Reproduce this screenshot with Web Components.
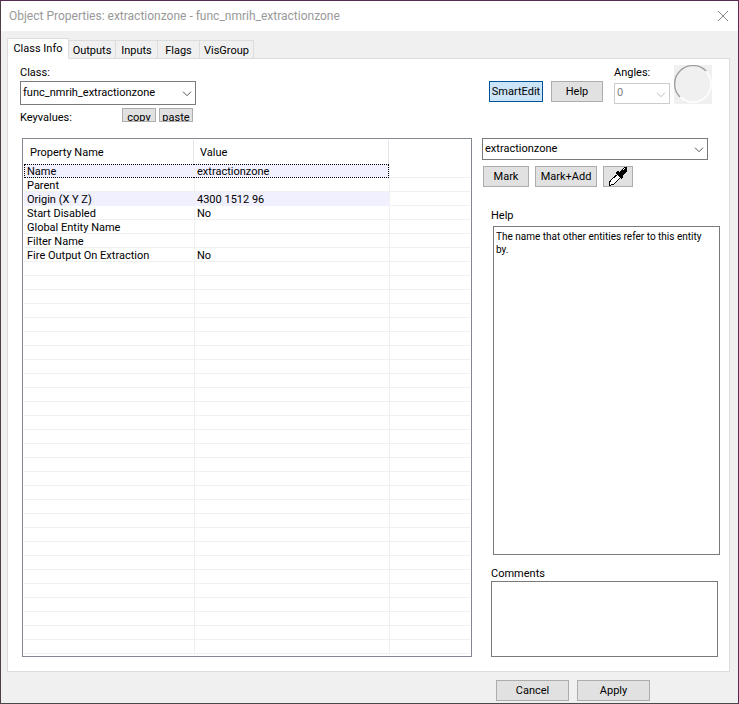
<!DOCTYPE html>
<html lang="en">
<head>
<meta charset="utf-8">
<title>Object Properties</title>
<style>
    body {
        margin: 0;
        font: 11px/16px Roboto, "Liberation Sans", sans-serif;
        color: #000;
    }
    .top {
        display: flex;
        justify-content: space-between;
        height: 67px;
        padding: 6px 17px 0 12px;
    }
    .class-info {
        --field-height: 24px;
        width: 176px;
    }
    .keyvalues {
        display: flex;
        gap: 3px;
        margin-top: 3px;
    }
    .keyvalues span {
        flex: 1;
        padding-top: 2px;
    }
    .keyvalues push-button {
        width: 34px;
    }
    .keyvalues push-button:last-child {
        margin-right: 3px;
    }
    .tools {
        display: flex;
        align-items: flex-start;
        gap: 8px;
    }
    .tools push-button {
        margin-top: 16px;
    }
    .tools combo-box {
        --label-height: 18px;
        --field-height: 21px;
        width: 56px;
        margin-left: 3px;
    }
    .tools angle-dial {
        margin-left: -4px;
    }
    .main {
        flex: 1;
        display: flex;
        gap: 10px;
        padding: 6px 9px 14px 14px;
    }
    property-list {
        flex: 1;
    }
    .side {
        display: flex;
        flex-direction: column;
        width: 238px;
    }
    .side combo-box {
        width: 226px;
    }
    .actions {
        display: flex;
        gap: 6px;
        margin: 6px 0 21px 1px;
    }
    .help {
        flex: 1;
        margin-left: 9px;
    }
    .comments {
        height: 91px;
        margin: 11px 2px 0 9px;
    }
</style>
</head>
<body>

<object-dialog caption="Object Properties: extractionzone - func_nmrih_extractionzone">
    <tab-strip slot="tabs" tabs="Class Info,Outputs,Inputs,Flags,VisGroup" widths="62,47,42,42,54"></tab-strip>

    <div class="top">
        <div class="class-info">
            <combo-box label="Class:" value="func_nmrih_extractionzone"></combo-box>
            <div class="keyvalues">
                <span>Keyvalues:</span>
                <push-button short>copy</push-button>
                <push-button short>paste</push-button>
            </div>
        </div>
        <div class="tools">
            <push-button active style="width: 54px">SmartEdit</push-button>
            <push-button style="width: 52px">Help</push-button>
            <combo-box label="Angles:" value="0" disabled></combo-box>
            <angle-dial></angle-dial>
        </div>
    </div>

    <div class="main">
        <property-list></property-list>
        <div class="side">
            <combo-box value="extractionzone" name="Value"></combo-box>
            <div class="actions">
                <push-button style="width: 46px">Mark</push-button>
                <push-button style="width: 62px">Mark+Add</push-button>
                <push-button style="width: 30px" name="Pick"><eye-dropper></eye-dropper></push-button>
            </div>
            <text-panel class="help" label="Help" inset readonly>The name that other entities refer to this entity by.</text-panel>
            <text-panel class="comments" label="Comments"></text-panel>
        </div>
    </div>

    <push-button slot="footer" style="width: 73px">Cancel</push-button>
    <push-button slot="footer" style="width: 73px">Apply</push-button>
</object-dialog>

<script>
class ObjectDialog extends HTMLElement {
    constructor() {
        super();
        this.attachShadow({ mode: 'open' });

        this.shadowRoot.innerHTML = `
            <style>
                :host {
                    display: flex;
                    flex-direction: column;
                    box-sizing: border-box;
                    min-height: 100vh;
                    border: 1px solid #5a2a55;
                    border-left-color: #4c4048;
                    border-bottom-color: #4a484a;
                    background: #f0f0f0;
                }
                header {
                    display: flex;
                    align-items: center;
                    justify-content: space-between;
                    height: 30px;
                    padding: 0 9px 0 8px;
                    background: #fff;
                }
                h1 {
                    margin: 0;
                    font: 12px/16px Roboto, "Noto Sans", sans-serif;
                    color: #999;
                }
                header button {
                    display: flex;
                    padding: 0;
                    border: 0;
                    background: none;
                }
                .page {
                    flex: 1;
                    display: flex;
                    flex-direction: column;
                    margin: 0 8px 0 6px;
                    border: 1px solid #dcdcdc;
                    background: #fff;
                }
                footer {
                    display: flex;
                    justify-content: flex-end;
                    gap: 8px;
                    padding: 8px 88px 2px 0;
                }
            </style>
            <header>
                <h1></h1>
                <button aria-label="Close">
                    <svg width="12" height="12" viewBox="0 0 12 12" fill="none" stroke="#888">
                        <path d="M1 1 11 11M11 1 1 11"/>
                    </svg>
                </button>
            </header>
            <slot name="tabs"></slot>
            <div class="page"><slot></slot></div>
            <footer><slot name="footer"></slot></footer>
        `;
    }

    connectedCallback() {
        this.shadowRoot.querySelector('h1').textContent = this.getAttribute('caption');
    }
}

customElements.define('object-dialog', ObjectDialog);

class TabStrip extends HTMLElement {
    constructor() {
        super();
        this.attachShadow({ mode: 'open' });

        this.shadowRoot.innerHTML = `
            <style>
                :host {
                    display: block;
                    padding: 7px 6px 0;
                    margin-bottom: -1px;
                    z-index: 1;
                }
                div {
                    display: flex;
                    align-items: flex-end;
                }
                button {
                    box-sizing: border-box;
                    height: 19px;
                    padding: 2px 0 0;
                    border: 1px solid #dcdcdc;
                    border-left-width: 0;
                    background: #f0f0f0;
                    font: inherit;
                    color: inherit;
                    white-space: nowrap;
                }
                button[aria-selected="true"] {
                    height: 21px;
                    padding: 0;
                    border-left-width: 1px;
                    border-bottom-color: #fff;
                    background: #fff;
                }
            </style>
            <div role="tablist"></div>
        `;
    }

    connectedCallback() {
        const list = this.shadowRoot.querySelector('div');
        const widths = this.getAttribute('widths').split(',');

        this.getAttribute('tabs').split(',').forEach((name, i) => {
            const tab = document.createElement('button');
            tab.setAttribute('role', 'tab');
            tab.setAttribute('aria-selected', i === 0);
            tab.style.width = `${widths[i]}px`;
            tab.textContent = name;
            list.appendChild(tab);
        });
    }
}

customElements.define('tab-strip', TabStrip);

class PushButton extends HTMLElement {
    constructor() {
        super();
        this.attachShadow({ mode: 'open' });

        this.shadowRoot.innerHTML = `
            <style>
                :host {
                    display: block;
                }
                button {
                    display: flex;
                    align-items: center;
                    justify-content: center;
                    box-sizing: border-box;
                    width: 100%;
                    height: 21px;
                    padding: 0;
                    border: 1px solid #adadad;
                    background: #e1e1e1;
                    font: inherit;
                    color: inherit;
                    overflow: hidden;
                }
                :host([active]) button {
                    border-color: #005499;
                    background: #cce4f7;
                }
                :host([short]) button {
                    align-items: flex-start;
                    height: 14px;
                    line-height: 18px;
                }
            </style>
            <button><slot></slot></button>
        `;
    }

    connectedCallback() {
        if (this.hasAttribute('name')) {
            this.shadowRoot.querySelector('button').setAttribute('aria-label', this.getAttribute('name'));
        }
    }
}

customElements.define('push-button', PushButton);

class ComboBox extends HTMLElement {
    constructor() {
        super();
        this.attachShadow({ mode: 'open' });

        this.shadowRoot.innerHTML = `
            <style>
                :host {
                    display: block;
                }
                label {
                    display: block;
                    height: var(--label-height, 16px);
                }
                .box {
                    display: grid;
                    align-items: center;
                }
                select, svg {
                    grid-area: 1 / 1;
                }
                select {
                    box-sizing: border-box;
                    width: 100%;
                    height: var(--field-height, 22px);
                    padding: 0 16px 1px 2px;
                    border: 1px solid #7a7a7a;
                    border-radius: 0;
                    background: #fff;
                    font: inherit;
                    color: #000;
                    appearance: none;
                }
                svg {
                    justify-self: end;
                    margin: 2px 4px 0 0;
                    pointer-events: none;
                    stroke: #555;
                }
                :host([disabled]) select {
                    border-color: #ccc;
                    color: #838383;
                    opacity: 1;
                }
                :host([disabled]) svg {
                    stroke: #bbb;
                }
            </style>
            <label for="field"></label>
            <div class="box">
                <select id="field"></select>
                <svg width="10" height="6" viewBox="0 0 10 6" fill="none"><path d="M1 .7 5 4.7 9 .7"/></svg>
            </div>
        `;
    }

    connectedCallback() {
        const label = this.shadowRoot.querySelector('label');
        const select = this.shadowRoot.querySelector('select');

        select.add(new Option(this.getAttribute('value')));
        select.disabled = this.hasAttribute('disabled');

        if (this.hasAttribute('label')) {
            label.textContent = this.getAttribute('label');
        } else {
            label.remove();
            select.setAttribute('aria-label', this.getAttribute('name'));
        }
    }
}

customElements.define('combo-box', ComboBox);

class AngleDial extends HTMLElement {
    constructor() {
        super();
        this.attachShadow({ mode: 'open' });

        this.shadowRoot.innerHTML = `
            <style>
                :host {
                    display: block;
                    width: 38px;
                    height: 39px;
                    background: #f0f0f0;
                }
                svg {
                    display: block;
                }
            </style>
            <svg width="38" height="39" viewBox="0 0 38 39" fill="none" stroke-width="1.5">
                <circle cx="19" cy="19" r="18" stroke="#fff"/>
                <path d="M6 32A18 18 0 0 1 32 6" stroke="#a0a0a0"/>
                <path d="M19 19h1v1h-1z" fill="#fff"/>
            </svg>
        `;
    }
}

customElements.define('angle-dial', AngleDial);

class EyeDropper extends HTMLElement {
    constructor() {
        super();
        this.attachShadow({ mode: 'open' });

        this.shadowRoot.innerHTML = `
            <style>
                :host {
                    display: block;
                    height: 19px;
                }
                svg {
                    display: block;
                }
            </style>
            <svg width="20" height="19" viewBox="0 0 20 19" shape-rendering="crispEdges">
                <path d="M10 7 13 10 6 17 3 18 1 18 1 16 3 13z" fill="#fff" stroke="#000"/>
                <path d="M8 5 10 4 12 5 14 2 16 0 18 0 19 1 19 4 17 6 15 8 15 10 14 12 12 11 8 7z"/>
                <path d="M15 3 17 1" stroke="#fff"/>
            </svg>
        `;
    }
}

customElements.define('eye-dropper', EyeDropper);

class PropertyList extends HTMLElement {
    constructor() {
        super();
        this.attachShadow({ mode: 'open' });

        this.rows = [
            ['Name', 'extractionzone', 'changed focused'],
            ['Parent', '', ''],
            ['Origin (X Y Z)', '4300 1512 96', 'changed'],
            ['Start Disabled', 'No', ''],
            ['Global Entity Name', '', ''],
            ['Filter Name', '', ''],
            ['Fire Output On Extraction', 'No', '']
        ];

        this.shadowRoot.innerHTML = `
            <style>
                :host {
                    display: block;
                    padding: 1px;
                    border: 1px solid #828790;
                }
                .grid {
                    height: 100%;
                    background:
                        linear-gradient(#fff, #fff) 0 0 / 100% 25px no-repeat,
                        linear-gradient(#f0f0f0, #f0f0f0) 170px 0 / 1px 100% no-repeat,
                        linear-gradient(#f0f0f0, #f0f0f0) 365px 0 / 1px 100% no-repeat,
                        repeating-linear-gradient(#fff 0 13px, #f0f0f0 13px 14px) 0 24px;
                }
                table {
                    width: 100%;
                    border-collapse: separate;
                    border-spacing: 0;
                    table-layout: fixed;
                }
                th, td {
                    box-sizing: border-box;
                    text-align: left;
                    font-weight: normal;
                    white-space: nowrap;
                }
                th {
                    height: 24px;
                    padding: 2px 6px 0;
                    border-right: 1px solid #e5e5e5;
                }
                th:last-child {
                    border: 0;
                }
                td {
                    height: 14px;
                    padding: 2px 3px 0;
                    line-height: 12px;
                }
                .changed td:not(:last-child) {
                    background: #f0f0ff;
                }
                .focused td:not(:last-child) {
                    border: 1px dotted #000;
                    border-width: 1px 0;
                    padding-top: 1px;
                    line-height: 11px;
                }
                .focused td:first-child {
                    border-left-width: 1px;
                    padding-left: 2px;
                }
                .focused td:nth-child(2) {
                    border-right-width: 1px;
                }
            </style>
            <div class="grid">
                <table>
                    <colgroup><col style="width: 170px"><col style="width: 195px"><col></colgroup>
                    <thead><tr><th>Property Name</th><th>Value</th><th></th></tr></thead>
                    <tbody></tbody>
                </table>
            </div>
        `;
    }

    connectedCallback() {
        const body = this.shadowRoot.querySelector('tbody');

        body.innerHTML = this.rows.map(([key, value, state]) =>
            `<tr class="${state}"><td>${key}</td><td>${value}</td><td></td></tr>`
        ).join('');
    }
}

customElements.define('property-list', PropertyList);

class TextPanel extends HTMLElement {
    constructor() {
        super();
        this.attachShadow({ mode: 'open' });

        this.shadowRoot.innerHTML = `
            <style>
                :host {
                    display: flex;
                    flex-direction: column;
                }
                label {
                    height: 15px;
                }
                :host([inset]) label {
                    height: 18px;
                }
                textarea {
                    flex: 1;
                    box-sizing: border-box;
                    min-height: 0;
                    padding: 3px 8px 3px 2px;
                    border: 1px solid #7a7a7a;
                    background: #fff;
                    font: inherit;
                    font-size: 10px;
                    line-height: 13px;
                    color: inherit;
                    resize: none;
                }
                :host([inset]) textarea {
                    margin-left: 2px;
                }
            </style>
            <label for="field"></label>
            <textarea id="field"></textarea>
        `;
    }

    connectedCallback() {
        const area = this.shadowRoot.querySelector('textarea');

        this.shadowRoot.querySelector('label').textContent = this.getAttribute('label');
        area.value = this.textContent;
        area.readOnly = this.hasAttribute('readonly');
    }
}

customElements.define('text-panel', TextPanel);
</script>
</body>
</html>
